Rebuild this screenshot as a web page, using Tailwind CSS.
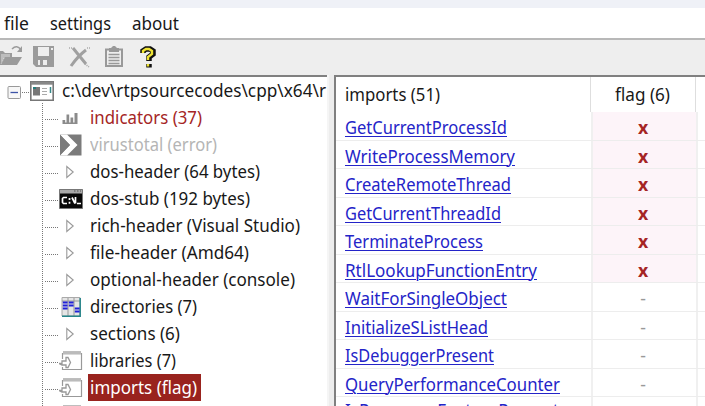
<!DOCTYPE html>
<html lang="en"><head><meta charset="utf-8"><title>imports</title>
<script src="https://cdn.jsdelivr.net/npm/@tailwindcss/browser@4"></script></head>
<body class="h-[406px] w-[705px] overflow-hidden bg-[#eeeeee] font-['Noto_Sans','Open_Sans',sans-serif] text-[17.7px] text-[#181818]">
<svg class="hidden">
<symbol id="exe" viewBox="0 0 24 20"><path d="M.8.8h22.4v18.4H.8z" fill="#fff" stroke="#777" stroke-width="1.6"/><path d="M1 2.200h22" stroke="#888" stroke-width="3"/><path d="M3 6h7v8.500H3z" fill="#777"/><path d="M3 6h3v2H3z" fill="#267c7c"/><path d="M12 7.500h5M12 10.500h5M12 13.500h5" stroke="#aaa"/><path d="M20.500 6v6" stroke="#378888" stroke-width="1.500"/></symbol>
<symbol id="bars" viewBox="0 0 24 20"><path d="M3.500 12h2.700v4H3.500zM7.500 6.500h2.700V16H7.500zM11.500 9.500h2.700V16h-2.700zM15.500 5h3v11h-3zM3.500 14.500h15V16h-15z" fill="#8b8b8b"/></symbol>
<symbol id="vt" viewBox="0 0 24 22"><path d="M1 .5h21.500v21H1z" fill="#7b7b7b"/><path d="M1 .5h7L18.500 11 8 21.500H1L11 11z" fill="#fff"/><path d="M1 1l10 10L1 21z" fill="#7b7b7b"/></symbol>
<symbol id="tri" viewBox="0 0 24 20"><path d="M7.800 4.500v11L14.200 10z" fill="#fff" stroke="#999" stroke-width="1.100"/></symbol>
<symbol id="cmd" viewBox="0 0 24 20"><path d="M.5.5h23v19H.5z" fill="#080808" stroke="#777"/><path d="M1 1h22v3.500H1z" fill="#aaa"/><path d="M15 2h1.500m1.500 0h1.500m1.500 0h1" stroke="#555"/><path d="M8 8.500H4.500L3.500 9.500v4l1 1H8M10.500 9v2M10.500 12.800v2M13 8.500l3 6M16.500 8v6.500M18 14.500h4" fill="none" stroke="#fff" stroke-width="1.700"/></symbol>
<symbol id="dir" viewBox="0 0 24 20"><path d="M3 .5h18v18.500H3z" fill="#e5e5e5" stroke="#aaa"/><path d="M9 1v18M15 1v18M3 4h18" stroke="#999"/><path d="M3 19.200h18.200V1" fill="none" stroke="#26858a" stroke-width="1.500"/><path d="M3.800 5.500h4.800M3.800 8.500h4.800M3.800 11.500h4.800M9.800 5.500h4.800M9.800 8.500h4.800M15.800 11.500h4.800M15.800 14.500h4.800" stroke="#2020d8" stroke-width="2"/></symbol>
<symbol id="lib" viewBox="0 0 24 20"><path d="M3.500 8V2.500h19V18.500h-19V16" fill="#fff" stroke="#999" stroke-width="1.200"/><path d="M4 1.800h18" stroke="#bbb" stroke-width="3.500"/><path d="M0 12.500h3V10h4V6.500h2l2.500 5-2.500 5H7V14H3z" fill="#fff" stroke="#999" stroke-width="1.300"/></symbol>
</svg>
<div class="h-2 bg-[#eff1f7]"></div>
<nav class="flex h-[30px] bg-white pt-px">
<div class="ml-1 w-[46px] shrink-0 leading-[28px]"><span class="inline-block origin-left whitespace-nowrap" data-w="25">file</span></div><div class="w-[82px] shrink-0 leading-[28px]"><span class="inline-block origin-left whitespace-nowrap" data-w="61">settings</span></div><div class="leading-[28px]"><span class="inline-block origin-left whitespace-nowrap" data-w="47">about</span></div>
</nav>
<div class="flex h-[37px] border-t-2 border-[#b8b8b8] bg-[#eeeeee]">
<svg width="175" height="34" viewBox="0 40 175 34"><path d="M0 51h3l2 2h7v4h10l-5 8H0z" fill="#9b9b9b"/><path d="M1 54h9v3H5l-4 6z" fill="#bdbdbd"/><path d="M4 58l-3 6" stroke="#ddd" stroke-dasharray="1 1"/><path d="M12 49q5-5 9 1" fill="none" stroke="#9b9b9b" stroke-width="1.500"/><path d="M22 46v6h-5z" fill="#9b9b9b"/><path d="M33 46h21v21H36l-3-3z" fill="#9b9b9b"/><path d="M38 47h11v9H38zM38 60h9v5h-9z" fill="#eee"/><path d="M40 60h3v5h-3z" fill="#9b9b9b"/><path d="M51 48h2v2h-2z" fill="#eee"/><path d="M73 48l4 5 9 11M86 50q-8 6-15 16" fill="none" stroke="#a0a0a0" stroke-width="3"/><path d="M85 64l4 3M69 48h4M87 48h3" stroke="#aaa" stroke-width="1.500" stroke-dasharray="1 1"/><path d="M106 49.500h16V66h-16z" fill="#eee" stroke="#999" stroke-width="2"/><path d="M109 48h2l2-2h2l2 2h2v4h-10z" fill="#999"/><path d="M108.500 54.500h11M108.500 57.500h11M108.500 60.500h11M108.500 63.500h11" stroke="#999" stroke-width="1.500"/><path d="M143 53v-2l3-2h4l3 2v3l-4 3v4M149 64v3.500" fill="none" stroke="#111" stroke-width="5.500"/><path d="M143 53v-2l3-2h3l3 2v3l-4 3v3M148 64v2.500" fill="none" stroke="#eee334" stroke-width="2.400"/></svg>
</div>
<main class="flex h-[331px]">
<section class="relative h-full w-[327px] shrink-0 overflow-hidden border-t-2 border-[#808080] bg-white">
<svg class="absolute left-0 top-0" width="90" height="329" viewBox="0 77 90 329"><path d="M22 92.500h8M42.500 103v303" stroke="#777" stroke-dasharray="1 1"/><path d="M45 119.500h14M45 146.500h14M45 173.500h14M45 200.500h14M45 227.500h14M45 254.500h14M45 281.500h14M45 308.500h14M45 335.500h14M45 362.500h14M45 389.500h14" stroke="#777" stroke-dasharray="1 1"/><rect x="8" y="86.500" width="12.500" height="12" rx="1" fill="#f7f7f7" stroke="#999"/><path d="M10.500 92.500h7.500" stroke="#3c53a6" stroke-width="1.300"/></svg>
<div id="tree" class="relative flex flex-col"></div>
</section>
<div class="w-[7px] shrink-0 border-l-2 border-[#f5f5f5] bg-[#ededed]"></div>
<section class="min-w-0 flex-1 overflow-hidden border-l-2 border-t-2 border-[#808080] bg-white">
<div class="flex h-[35px]"><div class="w-[255px] shrink-0 border-r border-[#dedede] pl-[9px] leading-[34px]"><span class="inline-block origin-left whitespace-nowrap" data-w="95">imports (51)</span></div><div class="w-[105px] shrink-0 border-r border-[#dedede] pl-[24px] leading-[34px]"><span class="inline-block origin-left whitespace-nowrap" data-w="55">flag (6)</span></div></div>
<div id="rows"></div>
</section>
</main>
<script>
const tree=[['exe','c:\\dev\\rtpsourcecodes\\cpp\\x64\\r',264],['bars','indicators (37)',112],['vt','virustotal (error)',127],['tri','dos-header (64 bytes)',170],['cmd','dos-stub (192 bytes)',160],['tri','rich-header (Visual Studio)',210],['tri','file-header (Amd64)',159],['tri','optional-header (console)',205],['dir','directories (7)',107],['tri','sections (6)',90],['lib','libraries (7)',86],['lib','imports (flag)',107],['lib','',0]];
document.getElementById('tree').innerHTML=tree.map(([icon,text,w],i)=>`<div class="flex h-[27px] shrink-0 items-center ${i?'pl-[59px]':'pl-[30px]'}"><svg class="shrink-0 ${i?'mr-[5px]':'mr-[6px]'}" width="24" height="${icon==='vt'?22:20}"><use href="#${icon}"/></svg><div class="h-[27px] shrink-0 pl-[2px] pr-[4px] leading-[26px] ${i===1?'text-[#a52525]':i===2?'text-[#b5b5b5]':i===11?'bg-[#99231e] text-white':''}">${text?`<span class="inline-block origin-left whitespace-nowrap" data-w="${w}">${text}</span>`:''}</div></div>`).join('');
const names=[['GetCurrentProcessId',162],['WriteProcessMemory',170],['CreateRemoteThread',166],['GetCurrentThreadId',156],['TerminateProcess',138],['RtlLookupFunctionEntry',192],['WaitForSingleObject',162],['InitializeSListHead',143],['IsDebuggerPresent',149],['QueryPerformanceCounter',215],['IsProcessorFeaturePresent',214]];
document.getElementById('rows').innerHTML=names.map(([text,w],i)=>`<div class="flex h-[28.5px] border-b border-[#ededed]"><div class="w-[257px] shrink-0 border-r-2 border-[#f0f0f0] pl-[9px] text-[#2424c8] ${i===10?'leading-[27px]':'leading-[31px]'}"><span data-w="${w}" class="inline-block origin-left whitespace-nowrap underline decoration-1 underline-offset-2">${text}</span></div><div class="w-[105px] shrink-0 border-r-2 border-[#f0f0f0] pr-[3px] text-center leading-[31px] ${i<6?'bg-[#fdf4f9] font-bold text-[#a52525]':'text-[#999999]'}">${i<6?'x':i<10?'-':''}</div></div>`).join('');
function fitLabels(){document.querySelectorAll('[data-w]').forEach(el=>{el.style.width='';el.style.transform='';const natural=el.getBoundingClientRect().width;el.style.width=el.dataset.w+'px';el.style.transform=`scaleX(${el.dataset.w/natural})`;});}
fitLabels();
window.addEventListener('load',()=>{fitLabels();document.fonts.ready.then(fitLabels);});
</script>
</body></html>
